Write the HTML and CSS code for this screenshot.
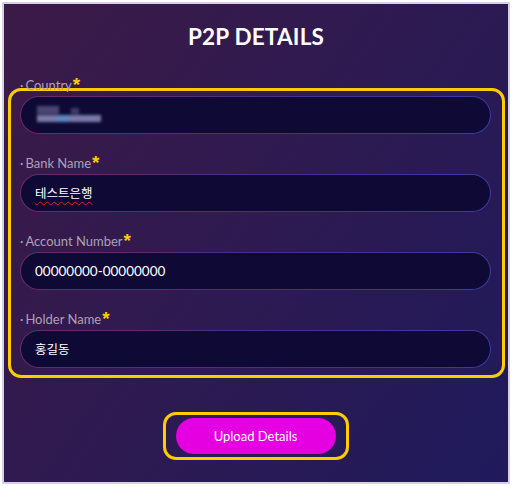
FILE: index.html
```html
<!DOCTYPE html>
<html lang="ko">
<head>
<meta charset="utf-8">
<title>P2P Details</title>
<link rel="stylesheet" href="styles.css">
</head>
<body>
<div class="panel">
  <h1 class="title">P2P DETAILS</h1>
  <div class="fields">
    <div class="group">
      <div class="label"><span class="dot">·</span>Country<span class="req">*</span></div>
      <div class="input"><span class="blur"><i class="b1"></i><i class="b2"></i><i class="b3"></i><i class="b4"></i></span></div>
    </div>
    <div class="group">
      <div class="label"><span class="dot">·</span>Bank Name<span class="req">*</span></div>
      <div class="input"><span class="ko spell">테스트은행</span></div>
    </div>
    <div class="group">
      <div class="label"><span class="dot">·</span>Account Number<span class="req">*</span></div>
      <div class="input">00000000-00000000</div>
    </div>
    <div class="group">
      <div class="label"><span class="dot">·</span>Holder Name<span class="req">*</span></div>
      <div class="input"><span class="ko">홍길동</span></div>
    </div>
  </div>
  <div class="actions">
    <div class="btn-ring"><button class="btn">Upload Details</button></div>
  </div>
</div>
</body>
</html>
```
FILE: styles.css
```css
html, body {
  margin: 0;
  padding: 0;
  background: #ffffff;
}
body {
  font-family: "Lato", "Noto Sans CJK KR", sans-serif;
}
.panel {
  box-sizing: border-box;
  margin: 2px 0 0 2px;
  width: 508px;
  height: 482px;
  border: 2px solid #d9cdea;
  background: linear-gradient(125deg, #3c1a47 0%, #2f1a50 45%, #1f1a5c 100%);
  padding: 20px 16px 0 16px;
}
.title {
  margin: 0;
  text-align: center;
  color: #ffffff;
  font-family: "Lato", sans-serif;
  font-weight: 700;
  font-size: 22.5px;
  line-height: 26px;
  letter-spacing: 0.2px;
}
.fields {
  position: relative;
  margin-top: 27px;
  display: flex;
  flex-direction: column;
  gap: 21px;
}
.fields::before {
  content: "";
  position: absolute;
  left: -12px;
  right: -13px;
  top: 11px;
  bottom: -10px;
  border: 3px solid #ffcc00;
  border-radius: 13px;
  pointer-events: none;
}
.group {
  display: flex;
  flex-direction: column;
  gap: 3px;
}
.label {
  height: 16px;
  line-height: 16px;
  font-size: 13px;
  color: #ada0b8;
  padding-left: 0;
  position: relative;
}
.dot {
  margin-right: 2px;
}
.req {
  color: #ffcc00;
  font-family: "Liberation Sans", sans-serif;
  font-size: 19px;
  font-weight: 700;
  margin-left: 1px;
  position: relative;
  top: 1px;
  line-height: 10px;
}
.input {
  box-sizing: border-box;
  height: 38px;
  width: 471px;
  border-radius: 19px;
  border: 1px solid transparent;
  background:
    linear-gradient(#0e0a35, #0e0a35) padding-box,
    linear-gradient(90deg, #6b2a6a 0%, #4a2e85 50%, #3b3aa4 100%) border-box;
  color: #ffffff;
  font-family: "Lato", "Noto Sans CJK KR", sans-serif;
  font-size: 13.5px;
  line-height: 36px;
  padding-left: 14px;
  display: flex;
  align-items: center;
}
.ko {
  font-family: "Noto Sans CJK KR", sans-serif;
  font-size: 12.5px;
}
.spell {
  text-decoration: underline wavy #e02020;
  text-decoration-thickness: 1px;
  text-underline-offset: 3px;
}
.blur {
  position: relative;
  display: inline-block;
  width: 66px;
  height: 18px;
  filter: blur(1.5px);
}
.blur i {
  position: absolute;
  display: block;
}
.b1 { left: 2px; top: 0; width: 22px; height: 8px; background: #4a4777; }
.b2 { left: 2px; top: 9px; width: 64px; height: 7px; background: #7b7aa6; }
.b3 { left: 22px; top: 9px; width: 12px; height: 7px; background: #5f87c0; }
.b4 { left: 36px; top: 2px; width: 8px; height: 6px; background: #3e3c6b; }
.actions {
  display: flex;
  justify-content: center;
  margin-top: 44px;
  padding-right: 1px;
}
.btn-ring {
  border: 3px solid #ffcc00;
  border-radius: 13px;
  padding: 3px 10px;
}
.btn {
  display: block;
  width: 160px;
  height: 36px;
  border: none;
  border-radius: 18px;
  background: #e400e0;
  color: #ffffff;
  font-family: "Lato", sans-serif;
  font-size: 13px;
  padding: 0;
}
```
